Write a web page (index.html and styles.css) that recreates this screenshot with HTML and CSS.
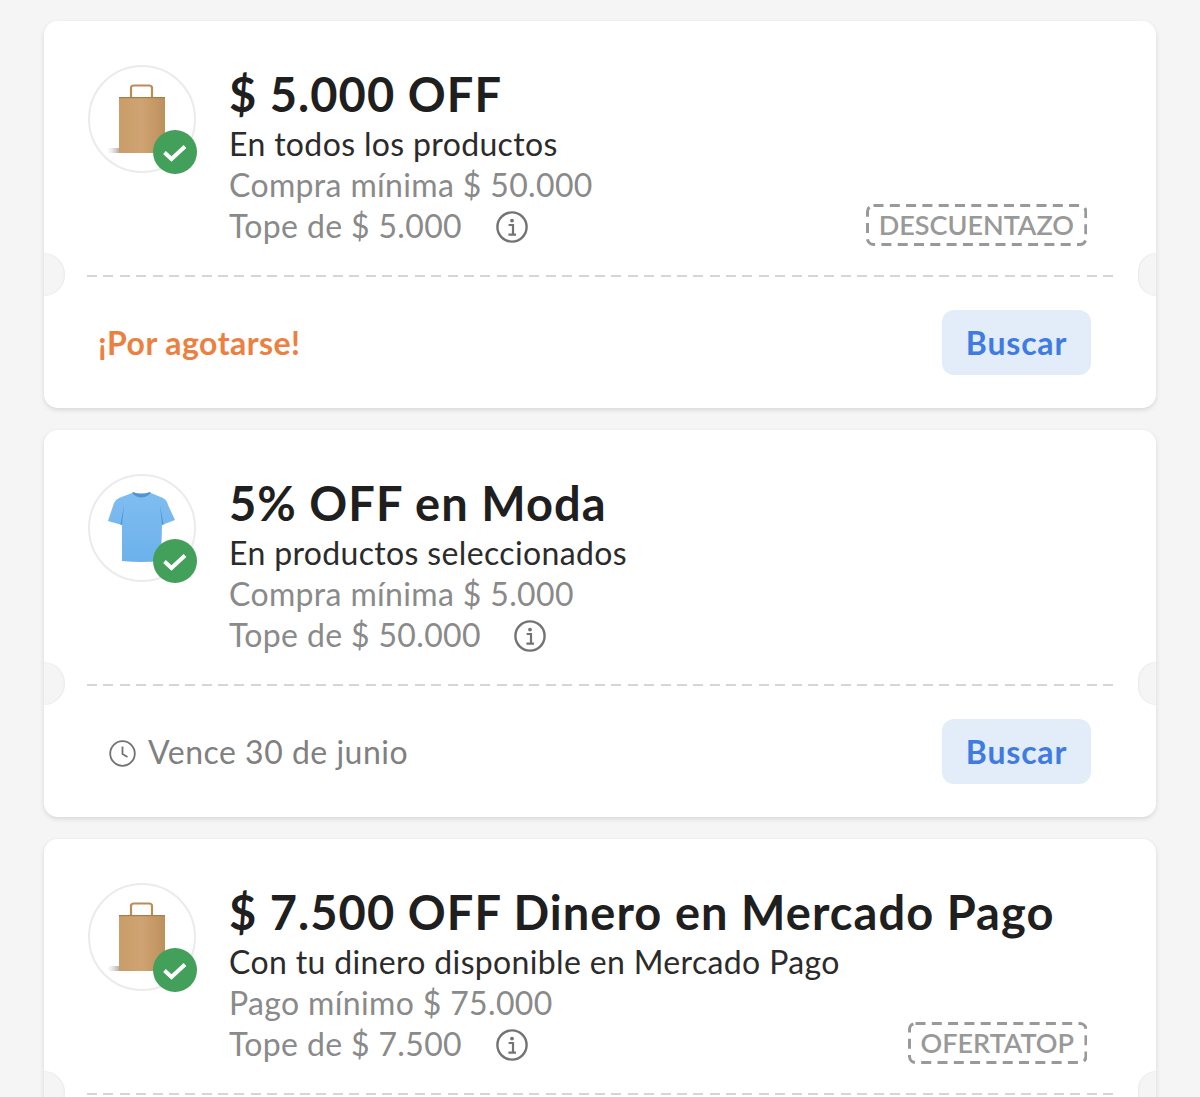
FILE: index.html
```html
<!DOCTYPE html>
<html lang="es">
<head>
    <meta charset="UTF-8">
    <meta name="viewport" content="width=device-width, initial-scale=1.0">
    <title>Cupones</title>
    <link rel="stylesheet" href="styles.css">
</head>
<body>
    <!-- Shared icons -->
    <svg class="icon-defs" aria-hidden="true">
        <defs>
            <linearGradient id="bagFill" x1="0" y1="0" x2="1" y2="0">
                <stop offset="0" stop-color="#c99d69"/>
                <stop offset="0.5" stop-color="#cfa472"/>
                <stop offset="1" stop-color="#bd8f5b"/>
            </linearGradient>
            <linearGradient id="bagShadow" x1="0" y1="0" x2="1" y2="0">
                <stop offset="0" stop-color="#d8d6d3" stop-opacity="0"/>
                <stop offset="1" stop-color="#b5b0aa"/>
            </linearGradient>
            <linearGradient id="shirtFill" x1="0" y1="0" x2="0" y2="1">
                <stop offset="0" stop-color="#7fbdf0"/>
                <stop offset="1" stop-color="#6cb1ec"/>
            </linearGradient>
            <symbol id="bag" viewBox="0 0 108 108">
                <rect x="19" y="83" width="12" height="5" fill="url(#bagShadow)"/>
                <path d="M43 32 L43 23 Q43 20.5 46 20.5 L61 20.5 Q64 20.5 64 23 L64 32" fill="none" stroke="#b98c58" stroke-width="2.2"/>
                <rect x="31" y="32" width="46" height="56" fill="url(#bagFill)"/>
                <rect x="31" y="32" width="46" height="1.2" fill="#a87c4b"/>
            </symbol>
            <symbol id="shirt" viewBox="0 0 108 108">
                <path d="M44 19 Q53 23 63 19 L75 24 Q79 26 80 31 L87 46 L74 51 L73 87 Q54 89 34 87 L34 51 L20 47 L26 29 Q27 26 31 24 Z" fill="url(#shirtFill)"/>
                <path d="M44 19 Q53 28 63 19 L62 18 Q53 21 45 18 Z" fill="#4f94d3"/>
                <path d="M36 31 L34 51 L32.5 50.5 Z M72 31 L74 51 L75.5 50.5 Z" fill="#4f94d3"/>
            </symbol>
            <symbol id="check" viewBox="0 0 44 44">
                <circle cx="22" cy="22" r="22" fill="#43a05a"/>
                <path d="M11.5 22.5 L18.5 29 L32 16.5" fill="none" stroke="#fff" stroke-width="4"/>
            </symbol>
            <symbol id="info" viewBox="0 0 32 32">
                <circle cx="16" cy="16" r="14.6" fill="none" stroke="#737373" stroke-width="2.4"/>
                <circle cx="16" cy="9.6" r="1.9" fill="#737373"/>
                <path d="M12.6 14 H17 V23.4 M12.4 23.6 H20" fill="none" stroke="#737373" stroke-width="2.2"/>
            </symbol>
        </defs>
    </svg>

    <main class="coupon-list">
        <article class="ticket">
            <span class="notch notch-left"></span>
            <span class="notch notch-right"></span>
            <div class="ticket-top">
                <div class="thumb">
                    <svg class="thumb-img"><use href="#bag"/></svg>
                    <svg class="thumb-check"><use href="#check"/></svg>
                </div>
                <div class="ticket-text">
                    <h2>$ 5.000 OFF</h2>
                    <p class="subtitle">En todos los productos</p>
                    <p class="detail">Compra mínima $ 50.000</p>
                    <p class="detail">Tope de $ 5.000 <svg class="info-icon"><use href="#info"/></svg></p>
                </div>
                <div class="code">
                    DESCUENTAZO
                    <svg class="code-border"><rect x="1.5" y="1.5" rx="6" ry="6"/></svg>
                </div>
            </div>
            <div class="ticket-line"></div>
            <div class="ticket-bottom">
                <span class="status-hot">¡Por agotarse!</span>
                <a href="#" class="search-button">Buscar</a>
            </div>
        </article>

        <article class="ticket">
            <span class="notch notch-left"></span>
            <span class="notch notch-right"></span>
            <div class="ticket-top">
                <div class="thumb">
                    <svg class="thumb-img"><use href="#shirt"/></svg>
                    <svg class="thumb-check"><use href="#check"/></svg>
                </div>
                <div class="ticket-text">
                    <h2>5% OFF en Moda</h2>
                    <p class="subtitle">En productos seleccionados</p>
                    <p class="detail">Compra mínima $ 5.000</p>
                    <p class="detail">Tope de $ 50.000 <svg class="info-icon"><use href="#info"/></svg></p>
                </div>
            </div>
            <div class="ticket-line"></div>
            <div class="ticket-bottom">
                <span class="status-date">
                    <svg class="clock-icon" viewBox="0 0 27 27">
                        <circle cx="13.5" cy="13.5" r="12.3" fill="none" stroke="#737373" stroke-width="1.8"/>
                        <path d="M13.5 6.5 V14 L18.5 17" fill="none" stroke="#737373" stroke-width="1.8"/>
                    </svg>
                    Vence 30 de junio
                </span>
                <a href="#" class="search-button">Buscar</a>
            </div>
        </article>

        <article class="ticket">
            <span class="notch notch-left"></span>
            <span class="notch notch-right"></span>
            <div class="ticket-top">
                <div class="thumb">
                    <svg class="thumb-img"><use href="#bag"/></svg>
                    <svg class="thumb-check"><use href="#check"/></svg>
                </div>
                <div class="ticket-text">
                    <h2>$ 7.500 OFF Dinero en Mercado Pago</h2>
                    <p class="subtitle">Con tu dinero disponible en Mercado Pago</p>
                    <p class="detail">Pago mínimo $ 75.000</p>
                    <p class="detail">Tope de $ 7.500 <svg class="info-icon"><use href="#info"/></svg></p>
                </div>
                <div class="code">
                    OFERTATOP
                    <svg class="code-border"><rect x="1.5" y="1.5" rx="6" ry="6"/></svg>
                </div>
            </div>
            <div class="ticket-line"></div>
        </article>
    </main>
</body>
</html>
```

FILE: styles.css
```css
html, body {
    margin: 0;
    padding: 0;
    height: 1097px;
    overflow: hidden;
    background-color: #f5f5f5;
    font-family: "Lato", "Open Sans", sans-serif;
}

.icon-defs {
    position: absolute;
    width: 0;
    height: 0;
}

.coupon-list {
    display: flex;
    flex-direction: column;
    gap: 22px;
    padding: 21px 44px 0;
}

/* Ticket card */
.ticket {
    position: relative;
    flex: none;
    height: 387px;
    background-color: #fff;
    border-radius: 14px;
    box-shadow: 0 2px 5px rgba(0, 0, 0, 0.12);
}

.notch {
    position: absolute;
    top: 232px;
    height: 43px;
    background-color: #f5f5f5;
}

.notch-left {
    left: 0;
    width: 21px;
    border-radius: 0 22px 22px 0;
    box-shadow: inset -1px 0 2px rgba(0, 0, 0, 0.05);
}

.notch-right {
    right: 0;
    width: 18px;
    border-radius: 22px 0 0 22px;
    box-shadow: inset 1px 0 2px rgba(0, 0, 0, 0.05);
}

.ticket-top {
    display: flex;
    box-sizing: border-box;
    height: 254px;
    padding: 44px 69px 29px 44px;
}

.thumb {
    position: relative;
    flex: none;
    box-sizing: border-box;
    width: 108px;
    height: 108px;
    margin-right: 33px;
    border: 2px solid #ebebeb;
    border-radius: 50%;
}

.thumb-img {
    position: absolute;
    top: -2px;
    left: -2px;
    width: 108px;
    height: 108px;
}

.thumb-check {
    position: absolute;
    right: -3px;
    bottom: -3px;
    width: 44px;
    height: 44px;
}

.ticket-text {
    flex: 1;
    min-width: 0;
    margin-top: 3px;
}

.ticket-text h2 {
    margin: -1px 0 2px;
    font-size: 47px;
    line-height: 54px;
    font-weight: 700;
    letter-spacing: 1.05px;
    color: #1f1f1f;
    white-space: nowrap;
}

.ticket-text p {
    margin: 0;
    font-size: 32px;
    line-height: 41px;
    letter-spacing: 0.35px;
    white-space: nowrap;
}

.subtitle {
    color: #2b2b2b;
}

.detail {
    color: #8a8a8a;
}

.info-icon {
    width: 32px;
    height: 32px;
    margin-left: 25px;
    vertical-align: -5px;
}

/* Coupon code with dashed frame */
.code {
    position: relative;
    flex: none;
    align-self: flex-end;
    padding: 0 13px;
    font-size: 27px;
    font-weight: 600;
    line-height: 42px;
    color: #999;
}

.code-border {
    position: absolute;
    top: 0;
    left: 0;
    width: 100%;
    height: 100%;
}

.code-border rect {
    width: calc(100% - 3px);
    height: calc(100% - 3px);
    fill: none;
    stroke: #999;
    stroke-width: 3;
    stroke-dasharray: 10 6.3;
}

.ticket-line {
    height: 2px;
    margin: 0 43px;
    background-image: repeating-linear-gradient(to right, #d6d6d6 0, #d6d6d6 10px, transparent 10px, transparent 16.387px);
}

.ticket-bottom {
    display: flex;
    justify-content: space-between;
    align-items: center;
    padding: 33px 65px 0 54px;
}

.status-hot {
    font-size: 32px;
    font-weight: 700;
    letter-spacing: 0.45px;
    color: #ec8040;
}

.status-date {
    display: flex;
    align-items: center;
    padding-left: 11px;
    font-size: 32px;
    letter-spacing: 0.5px;
    color: #808080;
}

.clock-icon {
    width: 27px;
    height: 27px;
    margin-right: 12px;
    margin-top: 3px;
}

.search-button {
    display: flex;
    justify-content: center;
    align-items: center;
    width: 149px;
    height: 65px;
    border-radius: 12px;
    background-color: #e3edfa;
    font-size: 32px;
    font-weight: 700;
    letter-spacing: 0.8px;
    color: #3f7be0;
    text-decoration: none;
}
```
